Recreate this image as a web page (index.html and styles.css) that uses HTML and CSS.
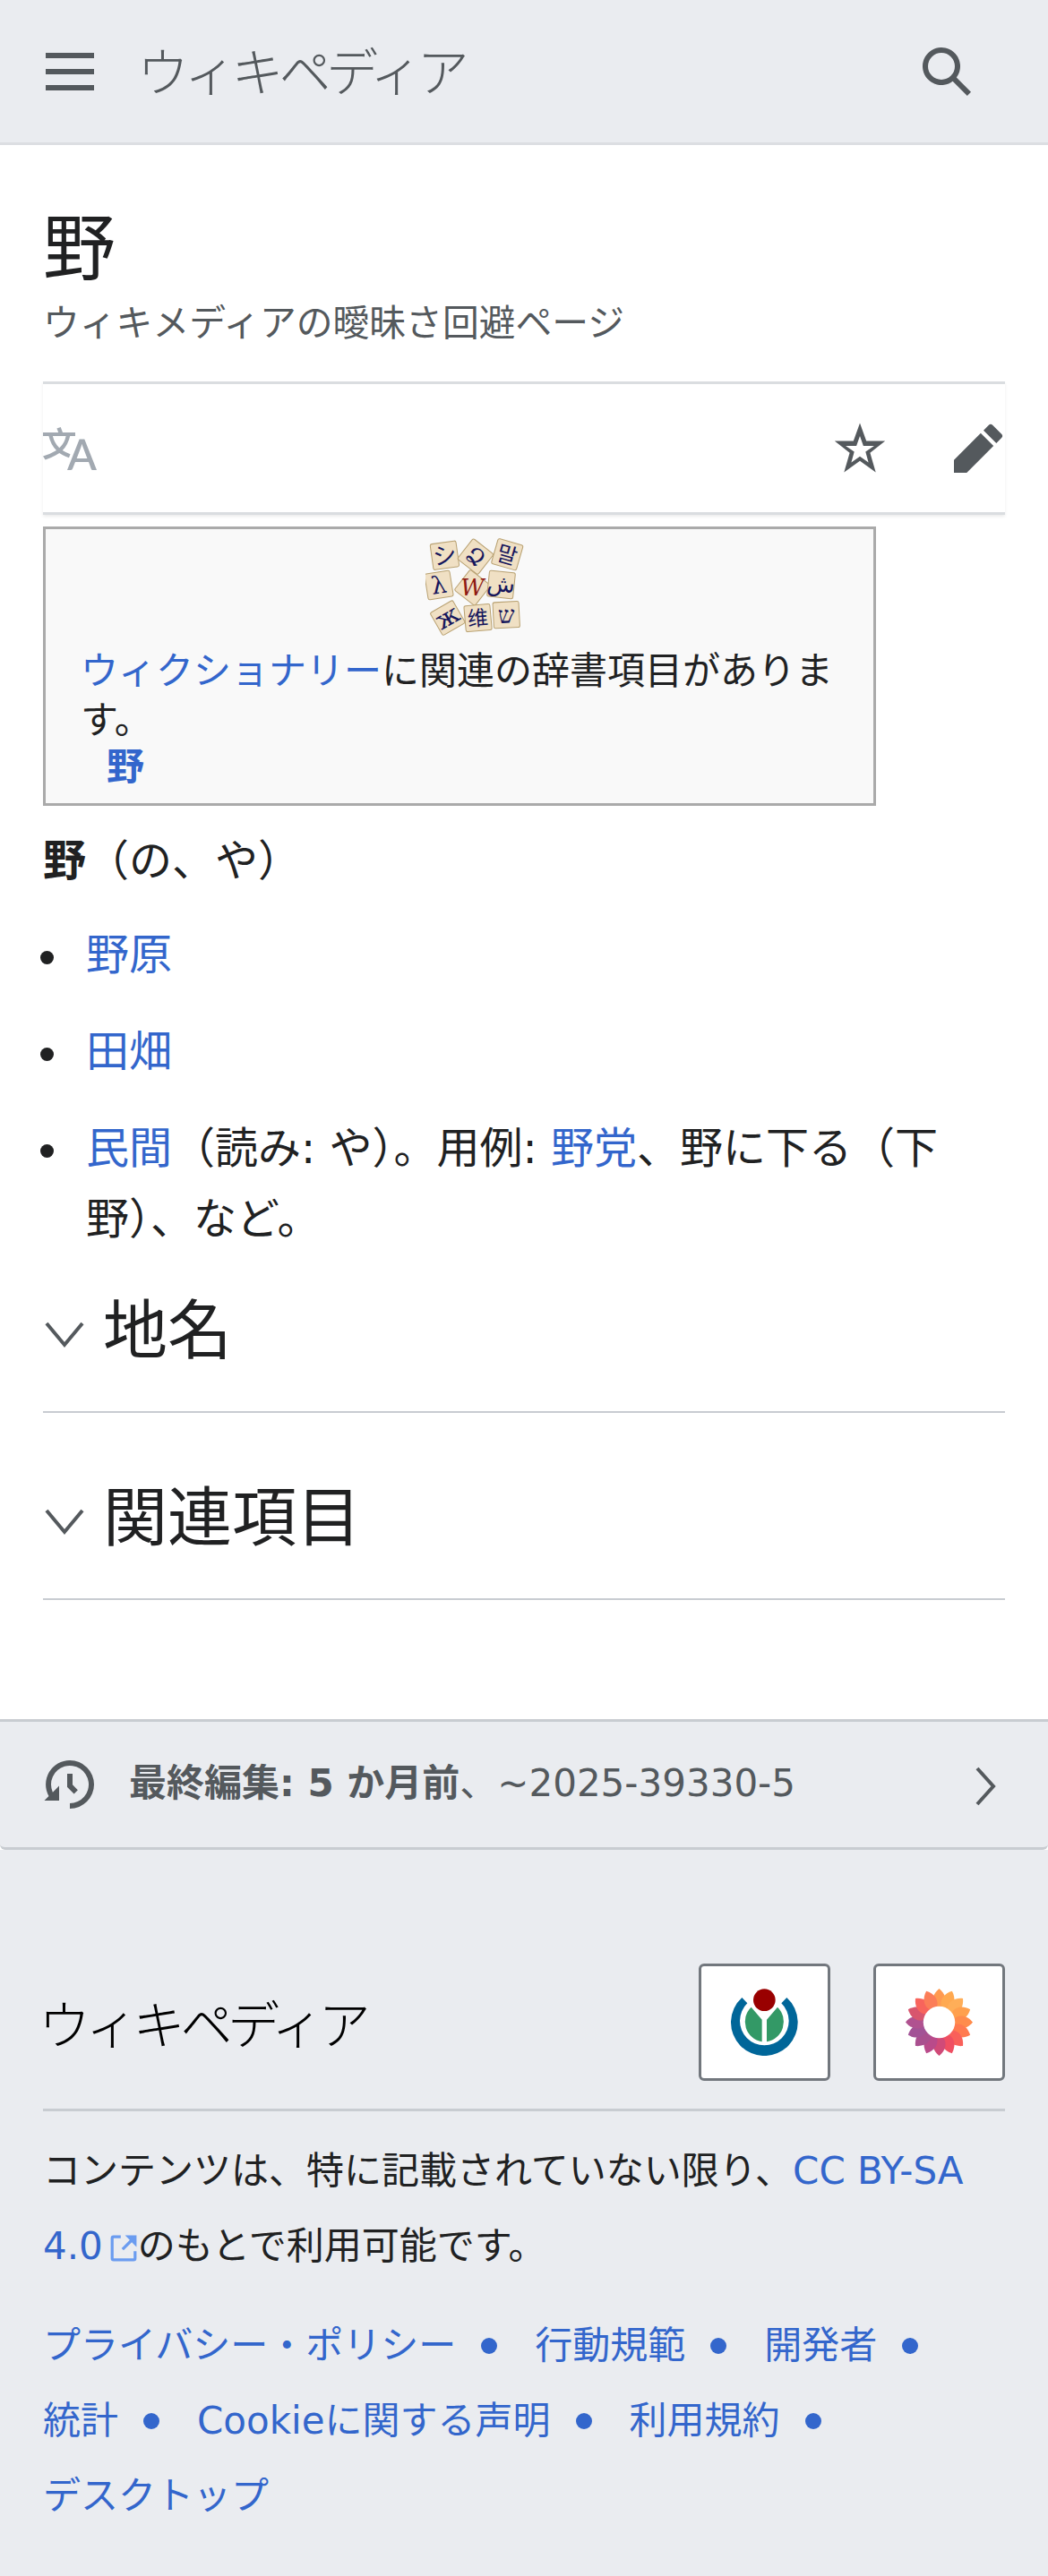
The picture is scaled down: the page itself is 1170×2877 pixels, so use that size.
FILE: index.html
```html
<!DOCTYPE html>
<html lang="ja">
<head>
    <meta charset="UTF-8">
    <meta name="viewport" content="width=device-width, initial-scale=1.0">
    <title>野 - ウィキペディア</title>
    <link rel="stylesheet" href="styles.css">
</head>
<body>
    <header class="top-bar">
        <svg class="icon" viewBox="0 0 20 20"><path d="M1 3v2h18V3zm0 8h18V9H1zm0 6h18v-2H1z"/></svg>
        <span class="wordmark top-wordmark">ウィキペディア</span>
        <svg class="icon search-icon" viewBox="0 0 20 20"><path d="M12.2 13.6a7 7 0 111.4-1.4l5.4 5.4-1.4 1.4zM3 8a5 5 0 1010 0A5 5 0 003 8"/></svg>
    </header>

    <main class="content">
        <h1 class="page-title">野</h1>
        <div class="page-sub">ウィキメディアの曖昧さ回避ページ</div>

        <div class="page-actions">
            <svg class="icon lang-icon" viewBox="0 0 20 20"><path d="M20 18h-1.44a.6.6 0 01-.4-.12.8.8 0 01-.23-.31L17 15h-5l-1 2.54a.8.8 0 01-.22.3.6.6 0 01-.4.14H9l4.55-11.47h1.89zm-3.53-4.31L14.89 9.5a12 12 0 01-.39-1.24q-.09.37-.19.69l-.19.56-1.58 4.19zm-6.3-1.58a13.4 13.4 0 01-2.91-1.41 11.46 11.46 0 002.81-5.37H12V4H7.31a4 4 0 00-.2-.56C6.87 2.79 6.6 2 6.6 2l-1.47.5s.4.89.6 1.5H0v1.33h2.15A11.23 11.23 0 005 10.7a17.2 17.2 0 01-5 2.1q.56.82.87 1.38a23.3 23.3 0 005.22-2.51 15.6 15.6 0 003.56 1.77zM3.63 5.33h4.91a8.1 8.1 0 01-2.45 4.45 9.1 9.1 0 01-2.46-4.45"/></svg>
            <svg class="icon" viewBox="0 0 20 20"><path fill-rule="evenodd" d="M10 .5 12.4 7.2H19.4L13.8 11.6 15.9 18.8 10 14.6 4.1 18.8 6.2 11.6.6 7.2H7.6ZM10 5.3 8.7 9H4.7L7.9 11.2 6.8 15.2 10 12.9 13.2 15.2 12.1 11.2 15.3 9H11.3Z"/></svg>
            <svg class="icon" viewBox="0 0 20 20"><path d="m16.77 8 1.94-2a1 1 0 000-1.41l-3.34-3.3a1 1 0 00-1.41 0L12 3.23zM1 14.25V19h4.75l9.96-9.96-4.75-4.75z"/></svg>
        </div>

        <div class="wikt-box">
            <svg class="wikt-logo" viewBox="55 25 325 335">
                <g class="tile" transform="rotate(-8 118 88)"><rect x="75" y="45" width="86" height="86" rx="6"/><text x="118" y="116" font-size="78">シ</text></g>
                <g class="tile" transform="rotate(38 220 92)"><rect x="177" y="49" width="86" height="86" rx="6"/><text x="220" y="118" font-size="74">Ձ</text></g>
                <g class="tile" transform="rotate(16 325 85)"><rect x="282" y="42" width="86" height="86" rx="6"/><text x="325" y="112" font-size="72">말</text></g>
                <g class="tile" transform="rotate(-9 97 187)"><rect x="57" y="144" width="84" height="86" rx="6"/><text x="98" y="214" font-size="80">λ</text></g>
                <g class="tile" transform="rotate(38 210 195)"><rect x="167" y="152" width="86" height="86" rx="6"/></g>
                <text class="tile-w" x="210" y="221" font-size="76">W</text>
                <g class="tile" transform="rotate(6 305 185)"><rect x="262" y="142" width="86" height="86" rx="6"/><text x="305" y="208" font-size="76">ش</text></g>
                <g class="tile" transform="rotate(-30 128 295)"><rect x="85" y="252" width="86" height="86" rx="6"/><text x="128" y="320" font-size="84">ж</text></g>
                <g class="tile" transform="rotate(-5 228 295)"><rect x="185" y="252" width="86" height="86" rx="6"/><text x="228" y="320" font-size="68">维</text></g>
                <g class="tile" transform="rotate(-3 322 285)"><rect x="279" y="242" width="86" height="86" rx="6"/><text x="322" y="312" font-size="78">ש</text></g>
            </svg>
            <div class="wikt-text"><a href="#">ウィクショナリー</a>に関連の辞書項目があります。</div>
            <div class="wikt-entry"><a href="#"><b>野</b></a></div>
        </div>

        <p class="lead"><b>野</b>（の、や）</p>
        <ul class="def-list">
            <li><a href="#">野原</a></li>
            <li><a href="#">田畑</a></li>
            <li><a href="#">民間</a>（読み: や）。用例: <a href="#">野党</a>、野に下る（下野）、など。</li>
        </ul>

        <h2 class="section-head">
            <svg class="chevron-down" viewBox="0 0 44 32"><path d="M2 4l20 24L42 4"/></svg>
            地名
        </h2>
        <h2 class="section-head">
            <svg class="chevron-down" viewBox="0 0 44 32"><path d="M2 4l20 24L42 4"/></svg>
            関連項目
        </h2>
    </main>

    <a class="last-edit" href="#">
        <svg class="icon" viewBox="0 0 20 20"><path d="M9 6v5h.06l2.48 2.47 1.41-1.41L11 10.12V6zm1-5a9 9 0 00-7.85 13.35L.5 16H6v-5.5l-2.38 2.38A7 7 0 1110 17v2a9 9 0 000-18"/></svg>
        <span class="last-edit-text"><b>最終編集: 5 か月前</b>、~2025-39330-5</span>
        <svg class="chevron-right" viewBox="0 0 24 44"><path d="M3 2l18 20L3 42"/></svg>
    </a>

    <footer class="site-footer">
        <div class="footer-top">
            <span class="wordmark footer-wordmark">ウィキペディア</span>
            <div class="footer-logos">
                <span class="logo-box">
                    <svg class="logo-wm" viewBox="168 158 225 225">
                        <circle cx="280" cy="196" r="37" fill="#990000"/>
                        <path fill="#006699" d="M205 188A112 112 0 1 0 355 188L337 207A82 82 0 1 1 223 207Z"/>
                        <path fill="#339966" d="M272 336V262L236 220A68 68 0 0 0 272 336ZM288 336V262L324 220A68 68 0 0 1 288 336Z"/>
                    </svg>
                </span>
                <span class="logo-box">
                    <svg class="logo-mw" viewBox="-110 -110 220 220">
                        <defs><path id="petal" d="M0-110C20-94 26-72 16-54L0-40-16-54C-26-72-20-94 0-110Z"/></defs>
                        <use href="#petal" fill="#ff9a50" transform="rotate(0)"/>
                        <use href="#petal" fill="#ffa950" transform="rotate(22.5)"/>
                        <use href="#petal" fill="#ffae58" transform="rotate(45)"/>
                        <use href="#petal" fill="#ffa04d" transform="rotate(67.5)"/>
                        <use href="#petal" fill="#ff8c4c" transform="rotate(90)"/>
                        <use href="#petal" fill="#ff7a50" transform="rotate(112.5)"/>
                        <use href="#petal" fill="#f9605a" transform="rotate(135)"/>
                        <use href="#petal" fill="#ef4f62" transform="rotate(157.5)"/>
                        <use href="#petal" fill="#d04a78" transform="rotate(180)"/>
                        <use href="#petal" fill="#b94a8a" transform="rotate(202.5)"/>
                        <use href="#petal" fill="#a9508f" transform="rotate(225)"/>
                        <use href="#petal" fill="#a25396" transform="rotate(247.5)"/>
                        <use href="#petal" fill="#b05290" transform="rotate(270)"/>
                        <use href="#petal" fill="#d8566e" transform="rotate(292.5)"/>
                        <use href="#petal" fill="#f8645c" transform="rotate(315)"/>
                        <use href="#petal" fill="#fb7d58" transform="rotate(337.5)"/>
                        <circle r="52" fill="#fff"/>
                    </svg>
                </span>
            </div>
        </div>
        <p class="license">コンテンツは、特に記載されていない限り、<a href="#">CC BY-SA 4.0<svg class="ext-icon" viewBox="0 0 20 20"><path d="M17 17H3V3h5V1H3a2 2 0 00-2 2v14a2 2 0 002 2h14a2 2 0 002-2v-5h-2z"/><path d="M19 1h-8l3.29 3.29-5.73 5.73 1.42 1.42 5.73-5.73L19 9z"/></svg></a>のもとで利用可能です。</p>
        <ul class="footer-links">
            <li><a href="#">プライバシー・ポリシー</a></li>
            <li><a href="#">行動規範</a></li>
            <li><a href="#">開発者</a></li>
            <li><a href="#">統計</a></li>
            <li><a href="#">Cookieに関する声明</a></li>
            <li><a href="#">利用規約</a></li>
            <li class="no-dot"><a href="#">デスクトップ</a></li>
        </ul>
    </footer>
</body>
</html>
```

FILE: styles.css
```css
body {
    margin: 0;
    font-family: "DejaVu Sans", "Noto Sans CJK JP", sans-serif;
    font-size: 48px;
    line-height: 79px;
    color: #202122;
    background-color: #fff;
}
a {
    color: #3366cc;
    text-decoration: none;
}
.icon {
    display: block;
    width: 60px;
    height: 60px;
    flex: none;
    fill: #54595d;
}
.wordmark {
    font-family: "Noto Sans CJK JP", sans-serif;
    font-weight: 300;
    font-size: 58px;
    letter-spacing: -5.2px;
    line-height: 70px;
}
.top-bar {
    display: flex;
    align-items: center;
    box-sizing: border-box;
    height: 162px;
    padding: 0 83px 0 48px;
    background-color: #eaecf0;
    border-bottom: 3px solid #dcdee2;
}
.top-wordmark {
    margin: -6px 0 0 45px;
    color: #54595d;
}
.search-icon {
    margin-left: auto;
}
.content {
    padding: 0 48px;
    height: 1692px;
    box-sizing: border-box;
}
.page-title {
    margin: 66px 0 0;
    font-size: 81px;
    font-weight: normal;
    line-height: 100px;
}
.page-sub {
    margin-top: 8px;
    font-size: 40.8px;
    line-height: 50px;
    color: #54595d;
}
.page-actions {
    display: flex;
    align-items: center;
    gap: 72px;
    margin-top: 40px;
    height: 143px;
    border-top: 3px solid #dadde0;
    border-bottom: 3px solid #dadde0;
    box-shadow: 0 2px 3px rgba(0, 0, 0, 0.08);
}
.lang-icon {
    fill: #a2a9b1;
    margin-right: auto;
}
.wikt-box {
    box-sizing: border-box;
    width: 930px;
    height: 312px;
    margin-top: 13px;
    padding: 8px 5px 0 39px;
    border: 3px solid #aaa;
    background-color: #f9f9f9;
    font-size: 42px;
    line-height: 55px;
}
.wikt-logo {
    display: block;
    width: 110px;
    height: 113px;
    margin: 0 auto 10px;
}
.tile rect {
    fill: #f0e0c4;
    stroke: #b9a273;
    stroke-width: 3;
}
.tile text,
.tile-w {
    font-family: "DejaVu Serif", "Noto Sans CJK JP", serif;
    text-anchor: middle;
    fill: #16165c;
}
.tile-w {
    fill: #8f1a12;
    font-style: italic;
}
.wikt-entry {
    margin-top: -3px;
    padding-left: 29px;
}
.lead {
    margin: 22px 0 0;
}
.def-list {
    list-style: none;
    margin: 26px 0 0;
    padding: 0 0 0 48px;
}
.def-list li {
    margin-bottom: 29px;
}
.def-list li::before {
    content: "";
    display: inline-block;
    width: 15px;
    height: 15px;
    margin-left: -51px;
    margin-right: 36px;
    border-radius: 50%;
    background-color: #202122;
    vertical-align: 6px;
}
.section-head {
    display: flex;
    align-items: center;
    margin: 40px 0 0;
    padding-bottom: 45px;
    font-size: 72px;
    font-weight: normal;
    line-height: 90px;
    border-bottom: 2px solid #c8ccd1;
}
.section-head + .section-head {
    margin-top: 72px;
}
.chevron-down {
    width: 44px;
    height: 32px;
    margin: 8px 21px 0 2px;
    fill: none;
    stroke: #54595d;
    stroke-width: 4;
}
.last-edit {
    display: flex;
    align-items: center;
    box-sizing: border-box;
    height: 146px;
    padding: 0 58px 0 48px;
    background-color: #eaecf0;
    border-top: 3px solid #c8ccd1;
    border-bottom: 3px solid #c8ccd1;
    border-radius: 0 0 6px 6px;
    color: #54595d;
    font-size: 42px;
}
.last-edit-text {
    margin-left: 36px;
    margin-top: -4px;
}
.chevron-right {
    width: 24px;
    height: 44px;
    margin-left: auto;
    margin-top: 3px;
    fill: none;
    stroke: #54595d;
    stroke-width: 4;
}
.site-footer {
    padding: 0 48px;
    height: 811px;
    box-sizing: border-box;
    background-color: #eaecf0;
    font-size: 42px;
    line-height: 84px;
}
.footer-top {
    display: flex;
    align-items: center;
    justify-content: space-between;
    box-sizing: border-box;
    height: 292px;
    padding-top: 128px;
    padding-bottom: 33px;
    border-bottom: 3px solid #c8ccd1;
}
.footer-wordmark {
    color: #000;
    margin-left: -5px;
}
.footer-logos {
    display: flex;
    gap: 48px;
}
.logo-box {
    display: flex;
    align-items: center;
    justify-content: center;
    box-sizing: border-box;
    width: 147px;
    height: 131px;
    background-color: #fff;
    border: 3px solid #72777d;
    border-radius: 6px;
}
.logo-wm,
.logo-mw {
    width: 75px;
    height: 75px;
}
.license {
    margin: 25px 0 0;
}
.ext-icon {
    width: 32px;
    height: 32px;
    margin-left: 7px;
    vertical-align: -4px;
    fill: #6b9cf0;
}
.footer-links {
    display: flex;
    flex-wrap: wrap;
    list-style: none;
    margin: 27px 0 0;
    padding: 0;
}
.footer-links li {
    display: flex;
    align-items: center;
    margin-right: 42px;
}
.footer-links li::after {
    content: "";
    width: 18px;
    height: 18px;
    margin-left: 28px;
    border-radius: 50%;
    background-color: #3366cc;
}
.footer-links li.no-dot::after {
    display: none;
}
```
